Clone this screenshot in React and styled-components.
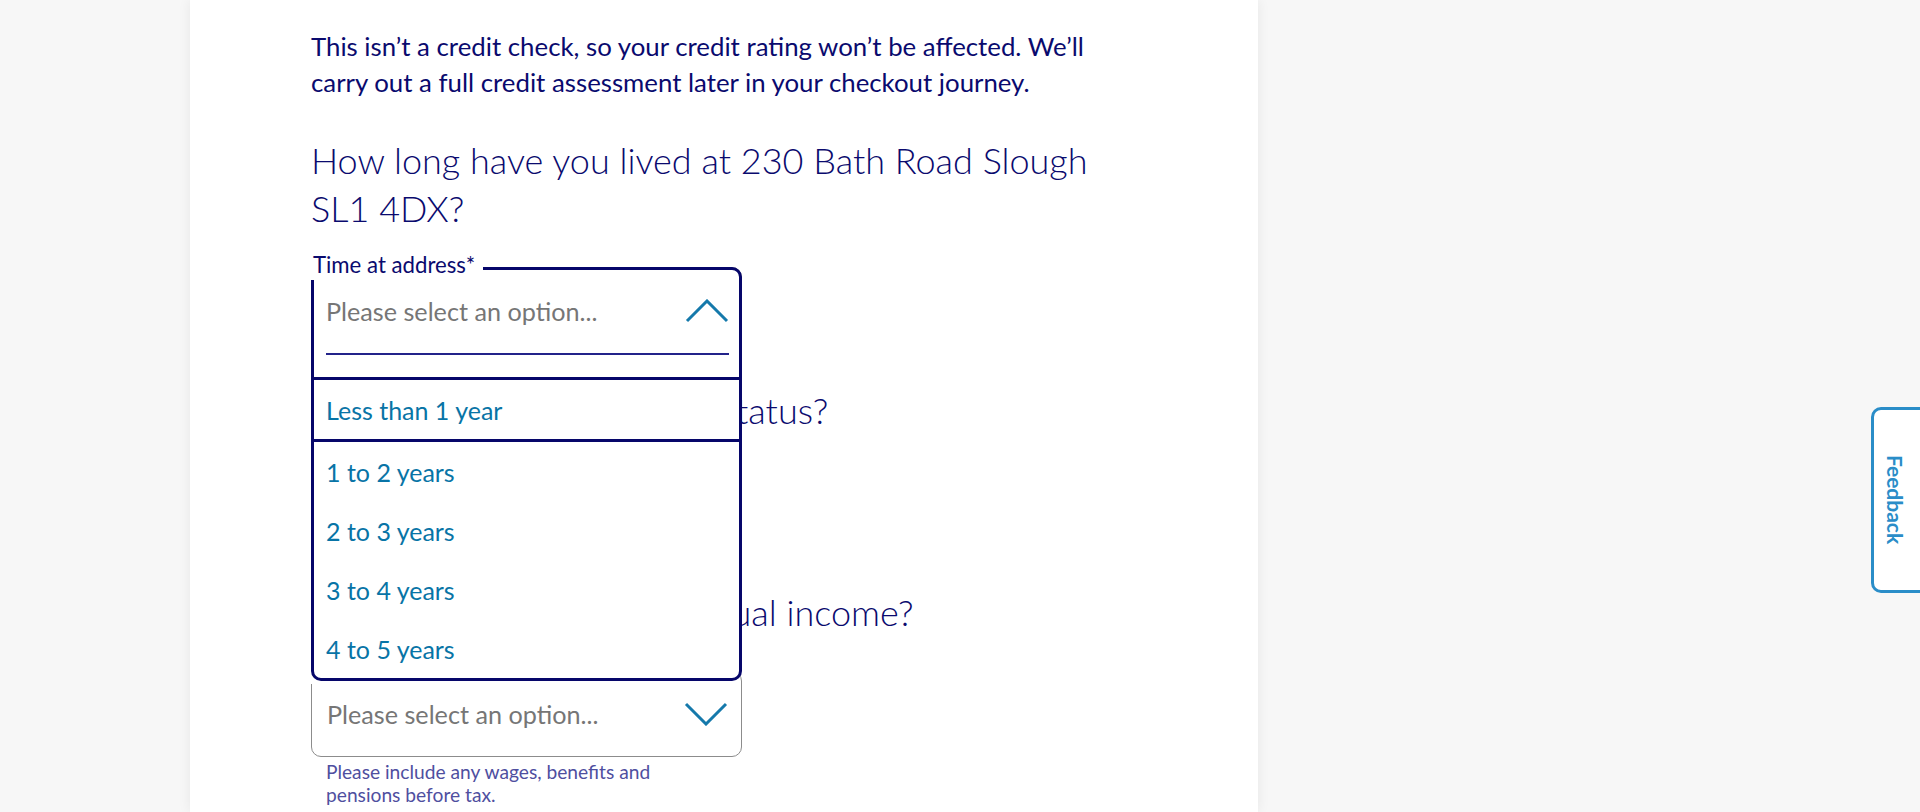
import React from "react";
import styled, { createGlobalStyle } from "styled-components";

const GlobalStyle = createGlobalStyle`
    html, body {
        margin: 0;
        padding: 0;
        background: #f7f7f7;
        font-family: Lato, "Liberation Sans", sans-serif;
    }
`;

const Page = styled.div`
    display: flex;
    min-height: 812px;
    padding-left: 190px;
`;

const Card = styled.main`
    width: 1068px;
    background: #fff;
    box-shadow: 0 0 12px rgba(0, 0, 0, 0.07);
`;

const Column = styled.div`
    width: 790px;
    padding: 28px 0 0 121px;
    color: #0a0a6e;
`;

const Intro = styled.p`
    margin: 0;
    font-size: 25.8px;
    line-height: 36px;
`;

const Question = styled.h2`
    margin: ${(p) => (p.$first ? "36px" : "33px")} 0 0;
    font-size: 36px;
    line-height: 48px;
    font-weight: 300;
    white-space: ${(p) => (p.$first ? "normal" : "nowrap")};
`;

const Field = styled.div`
    position: relative;
    z-index: ${(p) => (p.$open ? 10 : "auto")};
    width: 431px;
    margin-top: 35px;
`;

const Label = styled.label`
    position: absolute;
    top: -13px;
    left: 0;
    z-index: 6;
    padding: 0 8px 4px 2px;
    background: #fff;
    font-size: 22.2px;
    line-height: 22px;
    color: #0a0a6e;
`;

const Box = styled.div`
    box-sizing: border-box;
    height: 86px;
    display: flex;
    align-items: center;
    justify-content: space-between;
    padding: 0 13px 0 15px;
    border: 1px solid #8c8c8c;
    border-radius: 10px;
    background: #fff;
`;

const Placeholder = styled.span`
    font-size: 25.2px;
    line-height: 32px;
    color: #767676;
`;

const Dropdown = styled.div`
    position: absolute;
    top: 0;
    left: 0;
    right: 0;
    z-index: 5;
    border: 3px solid #06066a;
    border-radius: 10px;
    background: #fff;
    overflow: hidden;
`;

const Header = styled.div`
    height: 107px;
    box-sizing: border-box;
    padding: 25px 10px 0 12px;
`;

const HeaderRow = styled.div`
    display: flex;
    align-items: center;
    justify-content: space-between;
    height: 32px;
`;

const Underline = styled.div`
    margin-top: 26px;
    height: 2px;
    background: #23238a;
`;

const Options = styled.ul`
    margin: 0;
    padding: 0;
    list-style: none;
    border-top: 3px solid #06066a;
`;

const Option = styled.li`
    display: flex;
    align-items: center;
    height: 59px;
    padding-left: 12px;
    font-size: 25px;
    color: #0874a6;
    border-bottom: ${(p) => (p.$active ? "3px solid #06066a" : "none")};
`;

const Helper = styled.p`
    margin: 3px 0 0;
    padding-left: 15px;
    max-width: 360px;
    font-size: 19.2px;
    line-height: 23px;
    color: #4f4f9f;
`;

const FeedbackTab = styled.button`
    position: fixed;
    top: 407px;
    right: -10px;
    width: 59px;
    height: 186px;
    box-sizing: border-box;
    display: flex;
    align-items: center;
    justify-content: center;
    padding: 0 10px 0 0;
    border: 3px solid #2a8dc8;
    border-radius: 10px 0 0 10px;
    background: #fff;
    color: #2a8dc8;
    font-family: Lato, "Liberation Sans", sans-serif;
    font-size: 21px;
    font-weight: 700;
    writing-mode: vertical-rl;
`;

function Chevron({ up }) {
    return (
        <svg width="44" height="24" viewBox="0 0 44 24" fill="none">
            <polyline
                points={up ? "2,22 22,2 42,22" : "2,2 22,22 42,2"}
                stroke="#1579ab"
                strokeWidth="3"
            />
        </svg>
    );
}

const options = ["Less than 1 year", "1 to 2 years", "2 to 3 years", "3 to 4 years", "4 to 5 years"];

export default function App() {
    return (
        <>
            <GlobalStyle />
            <Page>
                <Card>
                    <Column>
                        <Intro>
                            This isn’t a credit check, so your credit rating won’t be affected. We’ll
                            carry out a full credit assessment later in your checkout journey.
                        </Intro>

                        <Question $first>How long have you lived at 230 Bath Road Slough SL1 4DX?</Question>
                        <Field $open>
                            <Label>Time at address*</Label>
                            <Box>
                                <Placeholder>Please select an option...</Placeholder>
                                <Chevron />
                            </Box>
                            <Dropdown>
                                <Header>
                                    <HeaderRow>
                                        <Placeholder>Please select an option...</Placeholder>
                                        <Chevron up />
                                    </HeaderRow>
                                    <Underline />
                                </Header>
                                <Options>
                                    {options.map((o, i) => (
                                        <Option key={o} $active={i === 0}>
                                            {o}
                                        </Option>
                                    ))}
                                </Options>
                            </Dropdown>
                        </Field>

                        <Question>What is your employment status?</Question>
                        <Field>
                            <Label>Employment status*</Label>
                            <Box>
                                <Placeholder>Please select an option...</Placeholder>
                                <Chevron />
                            </Box>
                        </Field>

                        <Question>What is your individual annual income?</Question>
                        <Field>
                            <Label>Annual income*</Label>
                            <Box>
                                <Placeholder>Please select an option...</Placeholder>
                                <Chevron />
                            </Box>
                        </Field>
                        <Helper>Please include any wages, benefits and pensions before tax.</Helper>
                    </Column>
                </Card>
            </Page>
            <FeedbackTab>Feedback</FeedbackTab>
        </>
    );
}
